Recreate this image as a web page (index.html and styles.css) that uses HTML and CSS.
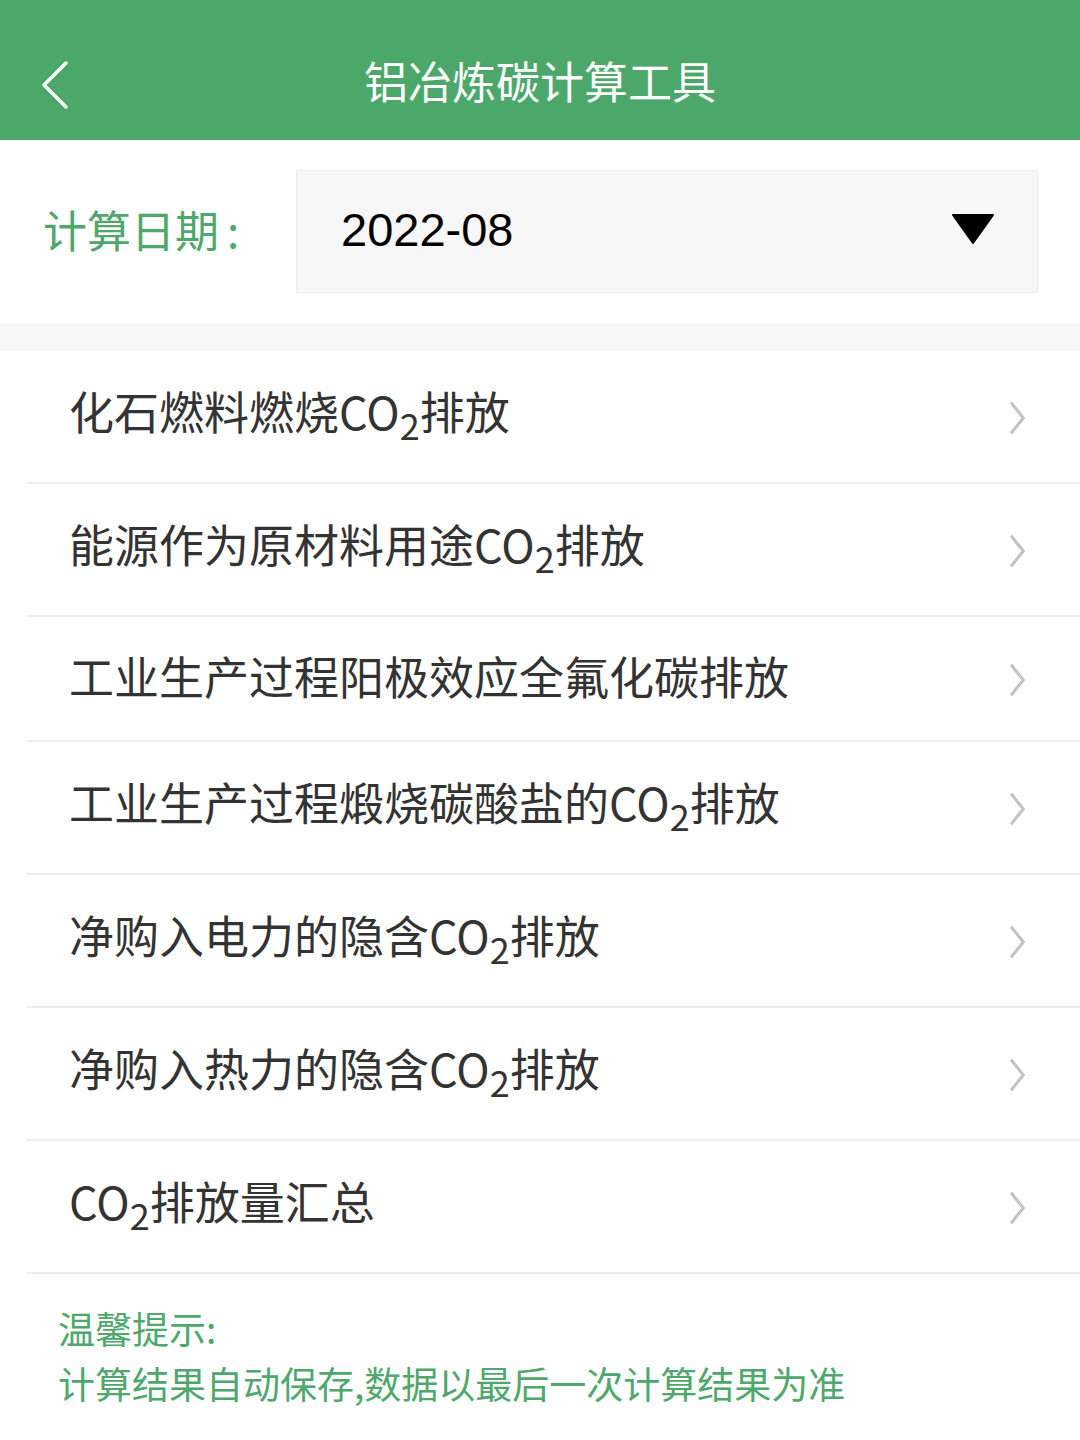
FILE: index.html
```html
<!DOCTYPE html>
<html lang="zh-CN">
<head>
    <meta charset="UTF-8">
    <meta name="viewport" content="width=device-width, initial-scale=1.0">
    <title>铝冶炼碳计算工具</title>
    <link rel="stylesheet" href="styles.css">
</head>
<body>
    <div class="header">
        <a class="back" href="#">
            <svg width="30" height="48" viewBox="0 0 30 48"><path d="M26 2 L4 24 L26 46" fill="none" stroke="#fff" stroke-width="3.5" stroke-linecap="round" stroke-linejoin="round"/></svg>
        </a>
        <h1>铝冶炼碳计算工具</h1>
    </div>

    <div class="date-row">
        <span class="date-label">计算日期<span class="colon">:</span></span>
        <div class="date-select">
            <span class="date-value">2022-08</span>
            <svg class="caret" width="42" height="30" viewBox="0 0 42 30"><path d="M1 1 H41 L21 29 Z" fill="#000" stroke="#000" stroke-width="2" stroke-linejoin="round"/></svg>
        </div>
    </div>

    <div class="gap"></div>

    <ul class="menu">
        <li class="item"><span>化石燃料燃烧CO<sub>2</sub>排放</span><i class="arrow"></i></li>
        <li class="item"><span>能源作为原材料用途CO<sub>2</sub>排放</span><i class="arrow"></i></li>
        <li class="item short"><span>工业生产过程阳极效应全氟化碳排放</span><i class="arrow"></i></li>
        <li class="item"><span>工业生产过程煅烧碳酸盐的CO<sub>2</sub>排放</span><i class="arrow"></i></li>
        <li class="item"><span>净购入电力的隐含CO<sub>2</sub>排放</span><i class="arrow"></i></li>
        <li class="item"><span>净购入热力的隐含CO<sub>2</sub>排放</span><i class="arrow"></i></li>
        <li class="item"><span>CO<sub>2</sub>排放量汇总</span><i class="arrow"></i></li>
    </ul>

    <div class="tips">
        <p>温馨提示:</p>
        <p>计算结果自动保存,数据以最后一次计算结果为准</p>
    </div>
</body>
</html>
```

FILE: styles.css
```css
body {
    margin: 0;
    padding: 0;
    background: #fff;
    font-family: "Noto Sans CJK SC", "Noto Sans", sans-serif;
    color: #333;
}
.header {
    height: 140px;
    background-color: #4ca86a;
    display: flex;
    align-items: center;
    justify-content: center;
    position: relative;
}
.header h1 {
    margin: 0;
    padding-top: 20px;
    font-size: 44px;
    font-weight: 400;
    color: #fff;
}
.back {
    position: absolute;
    left: 40px;
    top: 61px;
    display: block;
    line-height: 0;
}
.date-row {
    height: 183px;
    display: flex;
    align-items: center;
    padding: 0 43px;
}
.date-label {
    width: 253px;
    font-size: 44px;
    color: #4ea86c;
    padding-bottom: 6px;
}
.colon {
    margin-left: 8px;
}
.date-select {
    flex: 1;
    height: 123px;
    box-sizing: border-box;
    margin-right: -1px;
    background: #f7f7f7;
    border: 1px solid #ececec;
    display: flex;
    align-items: center;
    justify-content: space-between;
    padding: 0 43px 0 44px;
}
.date-value {
    font-family: "Liberation Sans", Arial, sans-serif;
    font-size: 47px;
    color: #000;
    padding-bottom: 4px;
}
.caret {
    margin-bottom: 6px;
}
.gap {
    height: 28px;
    background: #f7f7f7;
}
.menu {
    list-style: none;
    margin: 0;
    padding: 0 0 0 26px;
}
.item {
    height: 131px;
    border-bottom: 2px solid #eeeeee;
    display: flex;
    align-items: center;
    justify-content: space-between;
    padding: 0 56px 0 43px;
    font-size: 45px;
    color: #333;
}
.item.short {
    height: 123px;
}
.item span {
    line-height: 1;
    padding-bottom: 12px;
}
.item.short span {
    padding-bottom: 6px;
}
.item sub {
    font-size: 36px;
    vertical-align: -10px;
    line-height: 0;
}
.arrow {
    width: 20px;
    height: 20px;
    border-top: 4px solid #c4c4c4;
    border-right: 4px solid #c4c4c4;
    border-radius: 2px;
    transform: scaleX(0.8) rotate(45deg);
    margin-top: 2px;
}
.tips {
    padding: 27px 58px 0;
    color: #4ea86c;
    font-size: 37px;
}
.tips p {
    margin: 0;
    line-height: 55px;
}
```
